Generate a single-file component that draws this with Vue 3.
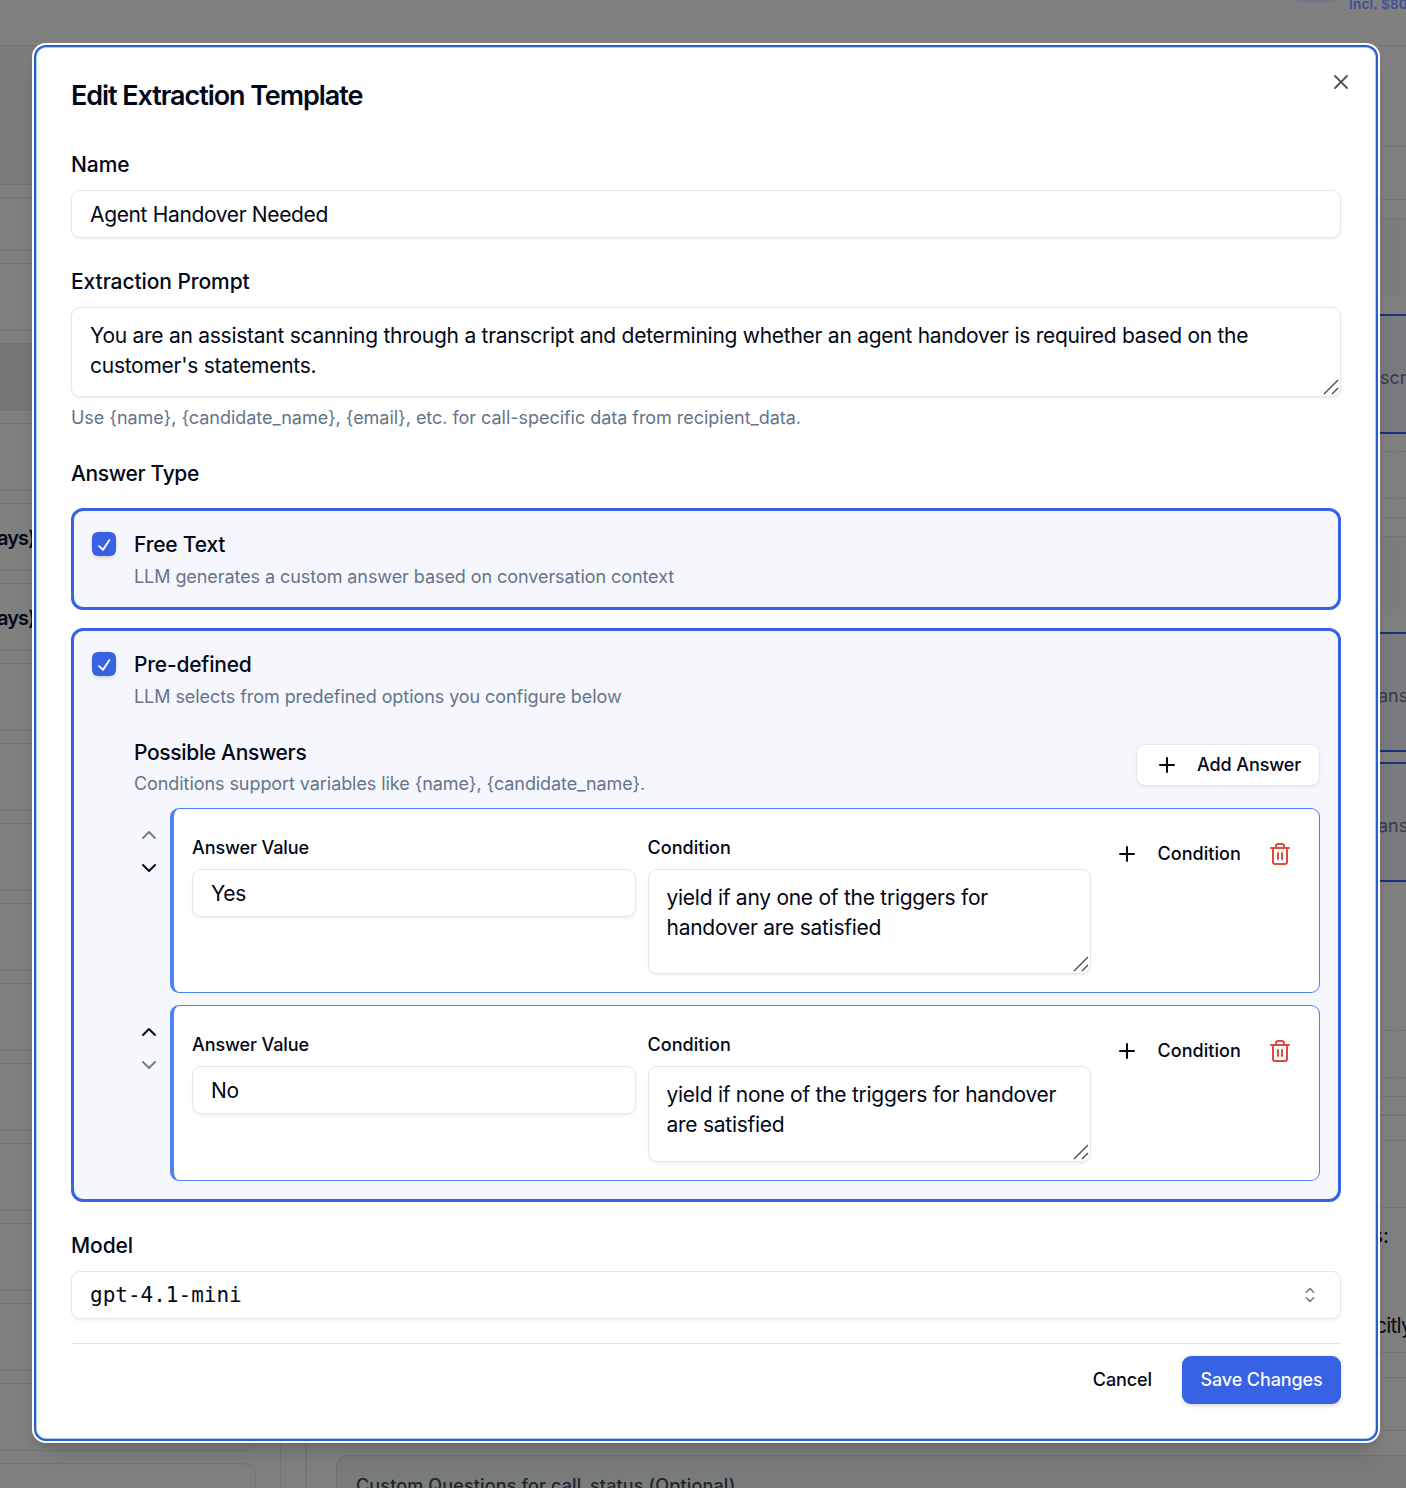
<script setup>
import { ref, reactive } from 'vue';

const name = ref('Agent Handover Needed');
const prompt = ref('You are an assistant scanning through a transcript and determining whether an agent handover is required based on the customer\'s statements.');
const model = ref('gpt-4.1-mini');
const freeText = ref(true);
const predefined = ref(true);

const answers = reactive([
    { value: 'Yes', condition: 'yield if any one of the triggers for handover are satisfied', size: 'tall' },
    { value: 'No', condition: 'yield if none of the triggers for handover are satisfied', size: '' }
]);

// Rows of the page behind the dialog
const sideRows = ['head', 'short', '', 'selected', '', 'days', 'days', '', '', '', '', '', '', '', '', '', '', ''];

function move(index, step) {
    const target = index + step;
    if (target < 0 || target >= answers.length) return;
    const item = answers.splice(index, 1)[0];
    answers.splice(target, 0, item);
}

function addAnswer() {
    answers.push({ value: '', condition: '', size: '' });
}
</script>

<template>
    <div class="screen">
        <div class="page">
            <div class="topbar">
                <span class="pill"></span>
                <span class="price">Incl. $80</span>
            </div>
            <div class="columns">
                <div class="side">
                    <div class="side-row" v-for="(row, i) in sideRows" :key="i" :class="row">
                        <span v-if="row == 'days'">ays)</span>
                    </div>
                </div>
                <div class="middle">
                    <div class="question-card">Custom Questions for call_status (Optional)</div>
                </div>
                <div class="right">
                    <div class="r-box r1"></div>
                    <div class="r-box r2"></div>
                    <div class="r-box green g1"></div>
                    <div class="r-box blue b1">scr</div>
                    <div class="r-box dashed d1"></div>
                    <div class="r-box line-gap"></div>
                    <div class="r-box green g2"></div>
                    <div class="r-box blue b2">ans</div>
                    <div class="r-box blue b3">ans</div>
                    <div class="r-box dashed d2"></div>
                    <div class="r-box r3"></div>
                    <div class="r-box r4"></div>
                    <div class="r-box r5">
                        <div class="r5-head"></div>
                        <p>s:</p>
                        <p class="second">citly</p>
                    </div>
                    <div class="r-box r6"></div>
                    <div class="r-box r7"></div>
                </div>
            </div>
        </div>

        <div class="dialog">
            <svg class="icon close" viewBox="0 0 24 24"><path d="M18 6 6 18M6 6l12 12" /></svg>
            <h2>Edit Extraction Template</h2>

            <div class="label">Name</div>
            <div class="field">{{ name }}</div>

            <div class="label next">Extraction Prompt</div>
            <div class="area prompt">
                {{ prompt }}
                <svg class="grip" viewBox="0 0 16 16"><path d="M1 15 15 1M9 15l6-6" /></svg>
            </div>
            <div class="hint">Use {name}, {candidate_name}, {email}, etc. for call-specific data from recipient_data.</div>

            <div class="label next tight">Answer Type</div>
            <div class="option first" @click="freeText = !freeText">
                <span class="check">
                    <svg v-if="freeText" viewBox="0 0 15 15"><path d="M11.467 3.727a.625.625 0 0 1 .181.865l-4.25 6.5a.625.625 0 0 1-.944.12l-2.75-2.5a.625.625 0 0 1 .841-.925l2.208 2.007 3.849-5.886a.625.625 0 0 1 .865-.181Z" /></svg>
                </span>
                <div class="option-body">
                    <div class="option-title">Free Text</div>
                    <div class="muted">LLM generates a custom answer based on conversation context</div>
                </div>
            </div>

            <div class="option">
                <span class="check" @click="predefined = !predefined">
                    <svg v-if="predefined" viewBox="0 0 15 15"><path d="M11.467 3.727a.625.625 0 0 1 .181.865l-4.25 6.5a.625.625 0 0 1-.944.12l-2.75-2.5a.625.625 0 0 1 .841-.925l2.208 2.007 3.849-5.886a.625.625 0 0 1 .865-.181Z" /></svg>
                </span>
                <div class="option-body">
                    <div class="option-title">Pre-defined</div>
                    <div class="muted">LLM selects from predefined options you configure below</div>

                    <div class="answers-head">
                        <div>
                            <div class="answers-title tight">Possible Answers</div>
                            <div class="muted">Conditions support variables like {name}, {candidate_name}.</div>
                        </div>
                        <button class="btn outline" @click.stop="addAnswer">
                            <svg class="icon" viewBox="0 0 24 24"><path d="M5 12h14M12 5v14" /></svg>
                            Add Answer
                        </button>
                    </div>

                    <div class="answer" v-for="(answer, i) in answers" :key="answer.value">
                        <div class="arrows">
                            <button :disabled="i == 0" @click="move(i, -1)">
                                <svg class="icon" viewBox="0 0 24 24"><path d="m18 15-6-6-6 6" /></svg>
                            </button>
                            <button :disabled="i == answers.length - 1" @click="move(i, 1)">
                                <svg class="icon" viewBox="0 0 24 24"><path d="m6 9 6 6 6-6" /></svg>
                            </button>
                        </div>
                        <div class="answer-card">
                            <div class="col">
                                <div class="small-label">Answer Value</div>
                                <div class="field">{{ answer.value }}</div>
                            </div>
                            <div class="col">
                                <div class="small-label wide">Condition</div>
                                <div class="area" :class="answer.size">
                                    {{ answer.condition }}
                                    <svg class="grip" viewBox="0 0 16 16"><path d="M1 15 15 1M9 15l6-6" /></svg>
                                </div>
                            </div>
                            <div class="actions">
                                <button class="btn ghost">
                                    <svg class="icon" viewBox="0 0 24 24"><path d="M5 12h14M12 5v14" /></svg>
                                    Condition
                                </button>
                                <button class="trash" @click="answers.splice(i, 1)">
                                    <svg class="icon" viewBox="0 0 24 24"><path d="M3 6h18M19 6v14c0 1-1 2-2 2H7c-1 0-2-1-2-2V6M8 6V4c0-1 1-2 2-2h4c1 0 2 1 2 2v2M10 11v6M14 11v6" /></svg>
                                </button>
                            </div>
                        </div>
                    </div>
                </div>
            </div>

            <div class="label next">Model</div>
            <div class="field select">
                <span>{{ model }}</span>
                <svg viewBox="0 0 15 15"><path d="m5.25 5.75 2.25-2.25 2.25 2.25M5.25 9.25l2.25 2.25 2.25-2.25" /></svg>
            </div>

            <div class="footer">
                <button class="btn cancel">Cancel</button>
                <button class="btn primary">Save Changes</button>
            </div>
        </div>
    </div>
</template>

<style>
body {
    margin: 0;
    background: #808080;
}
</style>

<style scoped>
* {
    box-sizing: border-box;
}

.screen {
    position: relative;
    width: 1406px;
    height: 1488px;
    overflow: hidden;
    font-family: Inter, "Liberation Sans", sans-serif;
    font-size: 21px;
    line-height: 30px;
    color: #020817;
}

button {
    font: inherit;
    color: inherit;
    border: 0;
    padding: 0;
    background: none;
}

p {
    margin: 0;
}

/* page behind */
.page {
    height: 1488px;
    background: #808080;
    overflow: hidden;
}

.topbar {
    height: 46px;
    border-bottom: 1px solid #747576;
    display: flex;
    justify-content: flex-end;
    align-items: flex-start;
    gap: 14px;
}

.pill {
    width: 38px;
    height: 3px;
    border-radius: 0 0 12px 12px;
    background: #747985;
}

.price {
    width: 57px;
    height: 14px;
    line-height: 8px;
    font-size: 13.5px;
    font-weight: 600;
    letter-spacing: 0.2px;
    color: #3d5296;
    white-space: nowrap;
}

.columns {
    display: flex;
    height: 1442px;
}

.side {
    width: 281px;
    flex-shrink: 0;
    padding-right: 24px;
    border-right: 1px solid #747576;
    display: flex;
    flex-direction: column;
    gap: 12px;
}

.side-row {
    height: 68px;
    flex-shrink: 0;
    border: 1px solid #747576;
    border-left: 0;
    border-radius: 0 12px 12px 0;
    font-size: 20px;
    font-weight: 600;
    line-height: 68px;
    letter-spacing: -0.9px;
}

.side-row span {
    margin-left: -3px;
}

.side-row.head {
    height: 139px;
    border-top: 0;
    background: #7a7c7e;
}

.side-row.short {
    height: 54px;
}

.side-row.selected {
    background: #757779;
}

.middle {
    margin-left: 24px;
    border-left: 2px solid #777777;
    flex-grow: 1;
    display: flex;
    align-items: flex-end;
    padding-left: 29px;
}

.question-card {
    flex-grow: 1;
    height: 33px;
    margin-right: -36px;
    padding: 15px 19px 0;
    border: 1px solid #707271;
    border-bottom: 0;
    border-right: 0;
    border-radius: 12px 0 0 0;
    background: #7a7c7b;
    font-size: 18px;
    font-weight: 500;
    letter-spacing: 0.14px;
    color: #20242d;
    overflow: hidden;
    white-space: nowrap;
}

.right {
    width: 36px;
    flex-shrink: 0;
    margin-bottom: 33px;
    background: #808080;
}

.r-box {
    border: 0 solid #747576;
    overflow: hidden;
}

.r1 {
    height: 101px;
    border-bottom-width: 1px;
}

.r2 {
    height: 53px;
    border-bottom-width: 1px;
}

.green {
    border-top-width: 1px;
    background: #7b7e7c;
}

.g1 {
    height: 79px;
    margin-top: 18px;
}

.g2 {
    height: 79px;
    margin-top: 18px;
}

.blue {
    height: 120px;
    border-color: #1b3278;
    border-width: 2px 0;
    background: #7a7b7f;
    font-size: 18px;
    line-height: 124px;
    color: #353c48;
    padding-left: 10px;
}

.b1 {
    margin-top: 17px;
}

.b2 {
    margin-top: 17px;
    padding-left: 8px;
}

.b3 {
    margin-top: 10px;
    padding-left: 8px;
}

.dashed {
    height: 48px;
    border-style: dashed;
    border-color: #707070;
    border-width: 1px 0;
}

.d1 {
    margin-top: 17px;
}

.d2 {
    margin-top: 148px;
}

.line-gap {
    height: 19px;
    border-bottom-width: 1px;
}

.r3 {
    height: 19px;
    border-bottom-width: 1px;
}

.r4 {
    height: 19px;
    border-bottom-width: 2px;
}

.r5 {
    height: 213px;
    margin-top: 24px;
    border-width: 1px 0;
    color: #090c14;
}

.r5-head {
    height: 67px;
    margin-bottom: 13px;
    border-bottom: 1px solid #747576;
}

.r5 p {
    margin-left: 2px;
}

.r5 .second {
    margin: 60px 0 0 5px;
    letter-spacing: -0.8px;
}

.r6 {
    height: 25px;
    border-bottom-width: 1px;
}

.r7 {
    height: 53px;
    border-bottom-width: 1px;
}

/* dialog */
.dialog {
    position: absolute;
    left: 36px;
    top: 47px;
    width: 1340px;
    height: 1392px;
    padding: 34px 34px 0;
    background: #fff;
    border: 1px solid #b5cbf2;
    border-radius: 10px;
    box-shadow: 0 0 0 2px #275fce, 0 0 0 4px #fff, 0 15px 24px 0 rgba(0, 0, 0, 0.12), 0 6px 9px 0 rgba(0, 0, 0, 0.1);
}

.icon {
    width: 24px;
    height: 24px;
    flex-shrink: 0;
    fill: none;
    stroke: currentColor;
    stroke-width: 2;
    stroke-linecap: round;
    stroke-linejoin: round;
}

.close {
    position: absolute;
    right: 22px;
    top: 22px;
    stroke: #4e525d;
    stroke-width: 1.8;
}

h2 {
    margin: 0 0 41px;
    font-size: 27px;
    line-height: 27px;
    font-weight: 600;
    letter-spacing: -1.07px;
}

.label {
    font-weight: 500;
    letter-spacing: -0.08px;
    margin-bottom: 10px;
}

.label.next {
    margin-top: 29px;
}

.label.tight, .tight {
    letter-spacing: -0.34px;
}

.field, .area {
    border: 1px solid #e2e8f0;
    border-radius: 9px;
    background: #fff;
    box-shadow: 0 1.5px 3px rgba(0, 0, 0, 0.05);
}

.field {
    height: 48px;
    padding: 0 18px;
    line-height: 47px;
    letter-spacing: -0.35px;
}

.area {
    position: relative;
    height: 96px;
    padding: 13px 18px;
    letter-spacing: -0.265px;
}

.area.prompt {
    height: 90px;
}

.area.tall {
    height: 105px;
}

.grip {
    position: absolute;
    right: 1px;
    bottom: 1px;
    width: 16px;
    height: 16px;
    fill: none;
    stroke: #565656;
    stroke-width: 1.5;
}

.hint, .muted {
    font-size: 18px;
    line-height: 24px;
    letter-spacing: -0.07px;
    color: #64748b;
}

.hint {
    margin-top: 9px;
    letter-spacing: -0.035px;
}

.option {
    display: flex;
    gap: 18px;
    padding: 18px;
    border: 3px solid #3662e3;
    border-radius: 12px;
    background: #f5f7fd;
}

.option.first {
    margin: 19px 0 18px;
}

.check {
    width: 24px;
    height: 24px;
    margin-top: 3px;
    flex-shrink: 0;
    border-radius: 6px;
    background: #3662e3;
    box-shadow: 0 1.5px 3px rgba(0, 0, 0, 0.12);
}

.check svg {
    display: block;
    width: 22px;
    height: 22px;
    margin: 2px 0 0 1px;
    fill: #fff;
}

.option-body {
    flex-grow: 1;
}

.option-title, .answers-title {
    font-weight: 500;
}

.option-title {
    padding-top: 1px;
    letter-spacing: -0.2px;
}

.option-title + .muted {
    margin-top: 5px;
}

.answers-head {
    display: flex;
    justify-content: space-between;
    align-items: flex-start;
    height: 54px;
    margin: 29px 0 16px;
}

.answers-head .muted {
    margin-top: 4px;
}

.btn {
    display: flex;
    align-items: center;
    gap: 18px;
    height: 42px;
    font-size: 18px;
    font-weight: 500;
    letter-spacing: -0.1px;
    border-radius: 9px;
    white-space: nowrap;
}

.outline {
    width: 184px;
    margin-top: 6px;
    padding: 0 17px 0 18px;
    background: #fff;
    border: 1px solid #e2e8f0;
    box-shadow: 0 1.5px 3px rgba(0, 0, 0, 0.05);
}

.answer {
    display: flex;
    gap: 6px;
}

.answer + .answer {
    margin-top: 12px;
}

.arrows {
    display: flex;
    flex-direction: column;
    gap: 3px;
    width: 30px;
    padding-top: 12px;
}

.arrows button {
    display: flex;
    align-items: center;
    justify-content: center;
    height: 30px;
}

.arrows button:disabled {
    color: #020817;
    opacity: 0.5;
}

.answer-card {
    flex-grow: 1;
    display: flex;
    gap: 12px;
    padding: 18px;
    border: 1px solid #4b82ee;
    border-left-width: 4px;
    border-radius: 9px;
    background: #fff;
}

.col {
    flex: 1 1 0;
    min-width: 0;
}

.small-label {
    margin: 7px 0 8px;
    font-size: 18px;
    line-height: 27px;
    font-weight: 500;
    letter-spacing: -0.1px;
}

.small-label.wide {
    letter-spacing: 0.05px;
}

.actions {
    display: flex;
    align-items: flex-start;
    gap: 6px;
    padding-top: 6px;
}

.ghost {
    width: 150px;
    padding: 0 12px;
    gap: 18.5px;
    letter-spacing: 0.05px;
}

.trash {
    display: flex;
    align-items: center;
    justify-content: center;
    width: 42px;
    height: 42px;
    color: #dc4a43;
}

.select {
    display: flex;
    align-items: center;
    justify-content: space-between;
    font-family: "DejaVu Sans Mono", monospace;
    letter-spacing: 0;
}

.select svg {
    width: 24px;
    height: 24px;
    fill: none;
    stroke: #73767e;
    stroke-width: 0.9;
    stroke-linecap: round;
    stroke-linejoin: round;
}

.footer {
    display: flex;
    justify-content: flex-end;
    gap: 12px;
    margin-top: 24px;
    padding-top: 12px;
    border-top: 1px solid #e2e4ea;
}

.footer .btn {
    height: 48px;
    padding: 0 18px;
}

.footer .primary {
    width: 159px;
    justify-content: center;
    background: #3662e3;
    color: #f8fafc;
    box-shadow: 0 1.5px 4px rgba(0, 0, 0, 0.15);
}
</style>
